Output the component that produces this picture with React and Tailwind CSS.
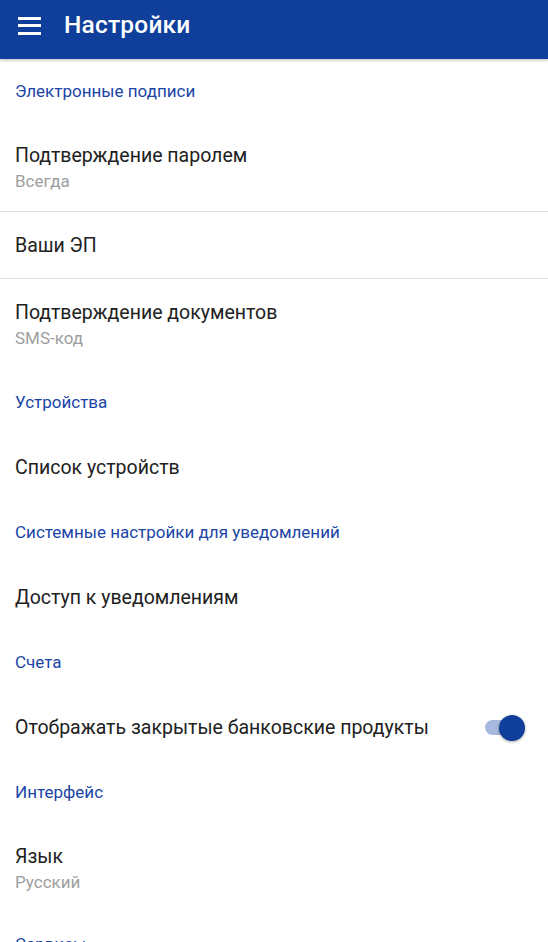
import React, { useState } from 'react';

const Section = ({ title }) => (
  <div className="h-[65px] flex items-center px-[15px] text-[17px] text-[#1b45a6]">
    {title}
  </div>
);

const Item = ({ title, sub, height = 'h-[65px]', divider, right }) => (
  <div className={`${height} flex items-center px-[15px] ${divider ? 'border-b border-[#e0e0e0]' : ''}`}>
    <div className="flex-1 flex flex-col justify-center">
      <div className="text-[19.5px] leading-[27px] text-[#212121]">{title}</div>
      {sub && <div className="text-[17px] leading-[25px] text-[#9e9e9e]">{sub}</div>}
    </div>
    {right}
  </div>
);

const Toggle = () => {
  const [on, setOn] = useState(true);
  return (
    <button
      onClick={() => setOn(!on)}
      className="relative w-[42px] h-[26px] mr-[8px] flex items-center"
    >
      <span className={`absolute left-[2px] w-[34px] h-[15px] rounded-full ${on ? 'bg-[#a7b9df]' : 'bg-[#bdbdbd]'}`} />
      <span
        className={`absolute top-0 w-[26px] h-[26px] rounded-full shadow-[0_1px_3px_rgba(0,0,0,0.35)] ${on ? 'left-[16px] bg-[#0f3f9b]' : 'left-0 bg-[#f5f5f5]'}`}
      />
    </button>
  );
};

export default function App() {
  return (
    <div className="w-[548px] h-[942px] overflow-hidden bg-white font-['Roboto',sans-serif]">
      <header className="relative z-10 h-[59px] pb-[8px] bg-[#0f3f9b] flex items-center shadow-[0_2px_2px_rgba(0,0,0,0.18)]">
        <div className="w-[64px] flex flex-col gap-[4.5px] pl-[18px]">
          <span className="block w-[23px] h-[3px] bg-white" />
          <span className="block w-[23px] h-[3px] bg-white" />
          <span className="block w-[23px] h-[3px] bg-white" />
        </div>
        <h1 className="text-white text-[24.5px] font-medium tracking-[0.2px]">Настройки</h1>
      </header>

      <Section title="Электронные подписи" />
      <Item title="Подтверждение паролем" sub="Всегда" height="h-[88px]" divider />
      <Item title="Ваши ЭП" height="h-[67px]" divider />
      <Item title="Подтверждение документов" sub="SMS-код" height="h-[91px]" />

      <Section title="Устройства" />
      <Item title="Список устройств" />

      <Section title="Системные настройки для уведомлений" />
      <Item title="Доступ к уведомлениям" />

      <Section title="Счета" />
      <Item title="Отображать закрытые банковские продукты" right={<Toggle />} />

      <Section title="Интерфейс" />
      <Item title="Язык" sub="Русский" height="h-[87px]" />

      <Section title="Сервисы" />
    </div>
  );
}
